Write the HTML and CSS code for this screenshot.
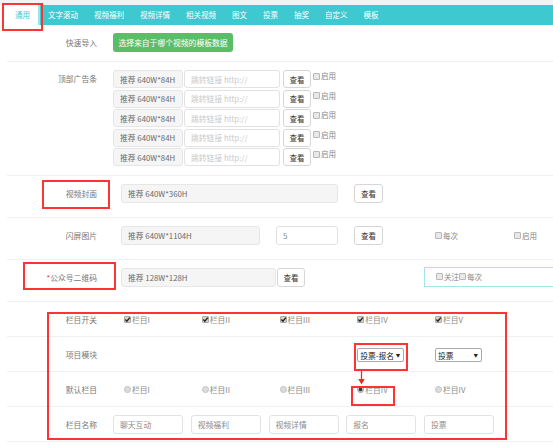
FILE: index.html
```html
<!DOCTYPE html>
<html lang="zh-CN">
<head>
<meta charset="utf-8">
<title>设置</title>
<link rel="stylesheet" href="styles.css">
</head>
<body>
<div class="topstrip"></div>
<nav class="nav">
  <span class="tab active">通用</span><span class="tab">文字滚动</span><span class="tab">视频福利</span><span class="tab">视频详情</span><span class="tab">相关视频</span><span class="tab">图文</span><span class="tab">投票</span><span class="tab">抽奖</span><span class="tab">自定义</span><span class="tab">模板</span>
</nav>

<div class="form">
  <div class="row r-import">
    <div class="label lh19">快速导入</div>
    <div class="content c16">
      <button class="btn-green">选择来自于哪个视频的模板数据</button>
    </div>
  </div>

  <div class="row r-ads">
    <div class="label lh18">顶部广告条</div>
    <div class="content c16 adlist">
      <div class="adline"><input class="inp gray w70" value="推荐 640W*84H" readonly><input class="inp link" placeholder="跳转链接 http://"><button class="btn w28">查看</button><span class="chk-top"><span class="cb"></span>启用</span></div>
      <div class="adline"><input class="inp gray w70" value="推荐 640W*84H" readonly><input class="inp link" placeholder="跳转链接 http://"><button class="btn w28">查看</button><span class="chk-top"><span class="cb"></span>启用</span></div>
      <div class="adline"><input class="inp gray w70" value="推荐 640W*84H" readonly><input class="inp link" placeholder="跳转链接 http://"><button class="btn w28">查看</button><span class="chk-top"><span class="cb"></span>启用</span></div>
      <div class="adline"><input class="inp gray w70" value="推荐 640W*84H" readonly><input class="inp link" placeholder="跳转链接 http://"><button class="btn w28">查看</button><span class="chk-top"><span class="cb"></span>启用</span></div>
      <div class="adline"><input class="inp gray w70" value="推荐 640W*84H" readonly><input class="inp link" placeholder="跳转链接 http://"><button class="btn w28">查看</button><span class="chk-top"><span class="cb"></span>启用</span></div>
    </div>
  </div>

  <div class="row r-std">
    <div class="label lh19">视频封面</div>
    <div class="content c24">
      <input class="inp gray h19 w217" value="推荐 640W*360H" readonly>
      <button class="btn h19 w29 ml16">查看</button>
    </div>
  </div>

  <div class="row r-std">
    <div class="label lh19">闪屏图片</div>
    <div class="content c24">
      <input class="inp gray h19 w139" value="推荐 640W*1104H" readonly>
      <input class="inp plain h19 w62 ml16" value="5">
      <button class="btn h19 w29 ml16">查看</button>
      <span class="chk ml52"><span class="cb"></span>每次</span>
      <span class="chk ml56"><span class="cb"></span>启用</span>
    </div>
  </div>

  <div class="row r-std">
    <div class="label lh19"><span class="req">*</span>公众号二维码</div>
    <div class="content c24">
      <input class="inp gray h19 w155" value="推荐 128W*128H" readonly>
      <button class="btn h19 w28 ml1">查看</button>
      <div class="follow"><span class="chk"><span class="cb"></span>关注</span><span class="chk"><span class="cb"></span>每次</span></div>
    </div>
  </div>

  <div class="row r-col">
    <div class="label">栏目开关</div>
    <div class="cols">
      <span class="cell chk"><span class="cb on"><svg viewBox="0 0 7 7"><path d="M1.3 3.6 L2.9 5.2 L5.8 1.6" fill="none" stroke="#222" stroke-width="1.4"/></svg></span>栏目I</span>
      <span class="cell chk"><span class="cb on"><svg viewBox="0 0 7 7"><path d="M1.3 3.6 L2.9 5.2 L5.8 1.6" fill="none" stroke="#222" stroke-width="1.4"/></svg></span>栏目II</span>
      <span class="cell chk"><span class="cb on"><svg viewBox="0 0 7 7"><path d="M1.3 3.6 L2.9 5.2 L5.8 1.6" fill="none" stroke="#222" stroke-width="1.4"/></svg></span>栏目III</span>
      <span class="cell chk"><span class="cb on"><svg viewBox="0 0 7 7"><path d="M1.3 3.6 L2.9 5.2 L5.8 1.6" fill="none" stroke="#222" stroke-width="1.4"/></svg></span>栏目IV</span>
      <span class="cell chk"><span class="cb on"><svg viewBox="0 0 7 7"><path d="M1.3 3.6 L2.9 5.2 L5.8 1.6" fill="none" stroke="#222" stroke-width="1.4"/></svg></span>栏目V</span>
    </div>
  </div>

  <div class="row r-col">
    <div class="label">项目模块</div>
    <div class="cols">
      <span class="cell"></span>
      <span class="cell"></span>
      <span class="cell"></span>
      <span class="cell"><span class="sel">投票-报名<span class="caret">▼</span></span></span>
      <span class="cell"><span class="sel">投票<span class="caret">▼</span></span></span>
    </div>
  </div>

  <div class="row r-col">
    <div class="label">默认栏目</div>
    <div class="cols">
      <span class="cell chk"><span class="rd"></span>栏目I</span>
      <span class="cell chk"><span class="rd"></span>栏目II</span>
      <span class="cell chk"><span class="rd"></span>栏目III</span>
      <span class="cell chk"><span class="rd on"></span>栏目IV</span>
      <span class="cell chk"><span class="rd"></span>栏目IV</span>
    </div>
  </div>

  <div class="row r-col">
    <div class="label">栏目名称</div>
    <div class="cols">
      <input class="inp name" value="聊天互动">
      <input class="inp name" value="视频福利">
      <input class="inp name" value="视频详情">
      <input class="inp name" value="报名">
      <input class="inp name" value="投票">
    </div>
  </div>
</div>

<div class="mark m-tab"></div>
<div class="mark m-cover"></div>
<div class="mark m-qr"></div>
<div class="mark m-section"></div>
<div class="mark m-select"></div>
<div class="mark m-radio"></div>
<svg class="arrow" viewBox="0 0 7 14" width="7" height="14"><line x1="3.5" y1="0" x2="3.5" y2="9" stroke="#f22" stroke-width="1.3"/><polygon points="0.3,8 6.7,8 3.5,13.5" fill="#f22"/></svg>
</body>
</html>
```

FILE: styles.css
```css
* { box-sizing: border-box; }
html, body { margin: 0; padding: 0; background: #fff; }
body {
  width: 553px;
  height: 447px;
  overflow: hidden;
  position: relative;
  font-family: "Noto Sans CJK SC", "Liberation Sans", sans-serif;
  font-size: 7.8px;
  color: #666;
}

.topstrip { height: 5px; background: #f2f2f2; }
.nav { margin-left: 7px; height: 20px; background: #3ec8cf; display: flex; }
.tab { font-size: 7.5px; line-height: 20px; padding: 0 8px; color: #fff; white-space: nowrap; }
.tab.active { background: #fff; color: #3ec8cf; border-right: 2px solid #a3e3e7; }

.form { padding-left: 7px; }
.row { display: flex; border-bottom: 1px solid #f0f0f0; }
.label { width: 90px; flex: none; text-align: right; color: #777; white-space: nowrap; }
.lh19 { line-height: 19px; }
.lh18 { line-height: 18px; }
.req { color: #e33; }
.content { display: flex; align-items: center; flex: none; }
.c16 { margin-left: 16px; }
.c24 { margin-left: 24px; }

.r-import { padding: 8px 0 9px; }
.r-ads { padding: 8px 0 9px; }
.r-std { padding: 8px 0 15px; height: 42px; }
.r-col { height: 35px; align-items: center; }

.btn-green {
  width: 120px; height: 19px; padding: 0;
  background: #5cbd68; color: #fff; border: none; border-radius: 3px;
  font-family: inherit; font-size: 7.8px; line-height: 19px;
}

.adlist { flex-direction: column; align-items: flex-start; gap: 1.5px; }
.adline { display: flex; align-items: flex-start; height: 18px; }

.inp {
  height: 18px; border: 1px solid #e2e2e2; border-radius: 3px;
  padding: 0 6px; font-family: inherit; font-size: 7.8px; color: #666;
  background: #fff; outline: none; margin: 0; flex: none;
}
.inp.gray { background: #f5f5f5; border-color: #e6e6e6; color: #6a6a6a; }
.inp.link { width: 96px; margin-left: 1px; }
.inp::placeholder { color: #cacaca; }
.inp.plain { color: #8a8a8a; }
.inp.name { width: 70px; height: 19px; color: #8a8a8a; }

.btn {
  height: 18px; padding: 0; flex: none;
  background: #fff; border: 1px solid #d6d6d6; border-radius: 3px;
  font-family: inherit; font-size: 7.5px; color: #333;
}
.adline .btn { margin-left: 3px; }

.h19 { height: 19px; }
.w70 { width: 70px; }
.w139 { width: 139px; }
.w155 { width: 155px; }
.w217 { width: 217px; }
.w62 { width: 62px; }
.w28 { width: 28px; }
.w29 { width: 29px; }
.ml1 { margin-left: 1px; }
.ml16 { margin-left: 16px; }
.ml52 { margin-left: 52px; }
.ml56 { margin-left: 56px; }

.chk { display: inline-flex; align-items: center; color: #888; white-space: nowrap; font-size: 7.5px; }
.chk-top { display: inline-flex; align-items: center; margin-left: 2px; margin-top: 2px; line-height: 8px; color: #888; font-size: 7.5px; }
.cb {
  display: inline-block; width: 7px; height: 7px; flex: none;
  border: 1px solid #b8b8b8; background: #e8e8e8; border-radius: 1px; margin-right: 1px;
  position: relative;
}
.cb.on { background: #d4d4d4; border-color: #a8a8a8; }
.cb svg { position: absolute; left: -1px; top: -1px; width: 7px; height: 7px; }

.follow {
  flex: none; width: 140px; height: 20px; margin-left: 119px; margin-top: -1px;
  border: 1px solid #9fe6ea; display: flex; align-items: center; padding-left: 11px;
}

.cols { display: grid; grid-template-columns: repeat(5, 77.75px); margin-left: 16px; align-items: center; }
.cell { padding-left: 11px; }
.cols .chk { font-size: 7.8px; }

.rd {
  display: inline-block; width: 7px; height: 7px; border-radius: 50%; flex: none;
  background: #dcdcdc; border: 1px solid #c2c2c2; margin-right: 1px;
}
.rd.on { background: radial-gradient(circle, #3a3a3a 0 1.5px, #d8d8d8 2.2px); border-color: #999; }

.sel {
  display: inline-flex; justify-content: space-between; align-items: center;
  width: 47px; height: 14px; border: 1px solid #a8a8a8; border-radius: 2px;
  padding: 0 3px 0 2px; color: #222; font-size: 7.8px; background: #fff; margin-top: 2px;
}
.caret { font-size: 4.5px; color: #222; }

.mark { position: absolute; border: 2px solid #f33; }
.m-tab { left: 2px; top: 3px; width: 41px; height: 28px; }
.m-cover { left: 42px; top: 180px; width: 68px; height: 29px; }
.m-qr { left: 23px; top: 262px; width: 93px; height: 28px; }
.m-section { left: 47px; top: 312px; width: 460px; height: 128px; }
.m-select { left: 354px; top: 343px; width: 54px; height: 28px; }
.m-radio { left: 351px; top: 386px; width: 44px; height: 20px; }
.arrow { position: absolute; left: 358px; top: 371px; }
```
